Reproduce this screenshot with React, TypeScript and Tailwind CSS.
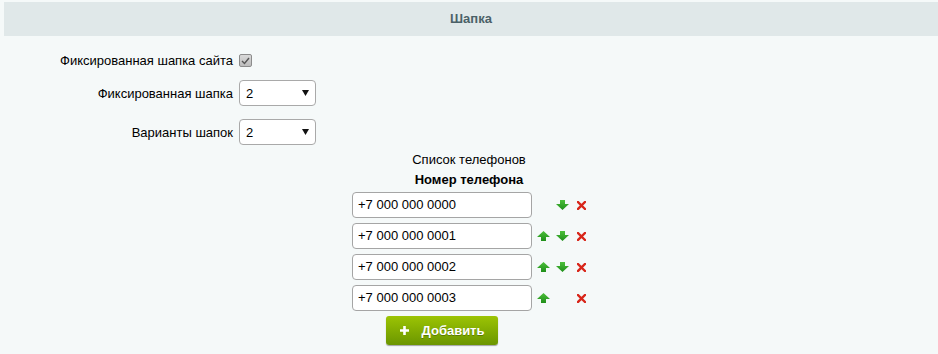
import React from 'react'

const phones = ['+7 000 000 0000', '+7 000 000 0001', '+7 000 000 0002', '+7 000 000 0003']

function ArrowUp() {
  return (
    <svg width="13" height="10" viewBox="0 0 13 10">
      <defs>
        <linearGradient id="gu" x1="0" y1="0" x2="0" y2="1">
          <stop offset="0" stopColor="#4cbf3a" />
          <stop offset="1" stopColor="#1f8f1a" />
        </linearGradient>
      </defs>
      <polygon points="6.5,0 13,6 9,6 9,10 4,10 4,6 0,6" fill="url(#gu)" />
    </svg>
  )
}

function ArrowDown() {
  return (
    <svg width="13" height="10" viewBox="0 0 13 10">
      <defs>
        <linearGradient id="gd" x1="0" y1="0" x2="0" y2="1">
          <stop offset="0" stopColor="#4cbf3a" />
          <stop offset="1" stopColor="#1f8f1a" />
        </linearGradient>
      </defs>
      <polygon points="4,0 9,0 9,4 13,4 6.5,10 0,4 4,4" fill="url(#gd)" />
    </svg>
  )
}

function Cross() {
  return (
    <svg width="9" height="9" viewBox="0 0 9 9">
      <path d="M1 1 L8 8 M8 1 L1 8" stroke="#d8261a" strokeWidth="2.4" strokeLinecap="square" />
    </svg>
  )
}

function FakeSelect({ value }: { value: string }) {
  return (
    <div className="flex h-[26px] w-[77px] items-center justify-between rounded-[4px] border border-[#a9a9a9] bg-white pl-[6px] pr-[6px] text-[13px] text-black">
      <span>{value}</span>
      <svg width="7" height="6" viewBox="0 0 7 6">
        <polygon points="0,0 7,0 3.5,6" fill="#111" />
      </svg>
    </div>
  )
}

export default function App() {
  return (
    <div
      className="min-h-[354px] w-full bg-[#f5f9f9] pt-[2px]"
      style={{ fontFamily: '"Liberation Sans", Arial, sans-serif' }}
    >
      {/* Section header */}
      <div className="ml-[4px] flex h-[34px] items-center justify-center bg-[#e0e8e9] text-[13px] font-bold text-[#4b6168]">
        Шапка
      </div>

      {/* Settings rows */}
      <div className="mt-[17px] grid grid-cols-[233px_auto] items-center gap-x-[6px] text-[13px] leading-[15px] text-black">
        <div className="text-right">Фиксированная шапка сайта</div>
        <div className="flex h-[13px] items-center">
          <div className="flex h-[13px] w-[13px] items-center justify-center rounded-[2px] border border-[#8c8c8c] bg-gradient-to-b from-[#d9d9d9] to-[#bdbdbd]">
            <svg width="9" height="8" viewBox="0 0 9 8">
              <path d="M1 4 L3.5 6.5 L8 1" stroke="#555" strokeWidth="1.4" fill="none" />
            </svg>
          </div>
        </div>

        <div className="mt-[12px] text-right">Фиксированная шапка</div>
        <div className="mt-[12px]">
          <FakeSelect value="2" />
        </div>

        <div className="mt-[13px] text-right">Варианты шапок</div>
        <div className="mt-[13px]">
          <FakeSelect value="2" />
        </div>
      </div>

      {/* Phones list */}
      <div className="mt-[7px] flex flex-col items-center text-[13px] text-black">
        <div className="leading-[16px]">Список телефонов</div>
        <div className="mt-[4px] font-bold leading-[16px]">Номер телефона</div>

        <div className="mt-[4px] flex flex-col gap-[5px]">
          {phones.map((phone, i) => (
            <div key={phone} className="flex items-center">
              <div className="flex h-[26px] w-[180px] items-center rounded-[4px] border border-[#a5a5a5] bg-white pl-[5px]">
                {phone}
              </div>
              <div className="ml-[5px] flex w-[13px] justify-center">
                {i > 0 && <ArrowUp />}
              </div>
              <div className="ml-[6px] flex w-[13px] justify-center">
                {i < phones.length - 1 && <ArrowDown />}
              </div>
              <div className="ml-[8px] flex w-[9px] justify-center">
                <Cross />
              </div>
            </div>
          ))}
          <div className="flex w-[180px] justify-center">
            <button className="flex h-[29px] w-[112px] items-center justify-center gap-[13px] rounded-[3px] bg-gradient-to-b from-[#9cc404] to-[#6b9600] text-[13px] font-bold text-white shadow-[0_1px_1px_rgba(0,0,0,0.35)] [text-shadow:0_1px_0_rgba(0,0,0,0.25)]">
              <svg width="9" height="9" viewBox="0 0 9 9">
                <path d="M4.5 0 V9 M0 4.5 H9" stroke="#fff" strokeWidth="2.6" />
              </svg>
              <span>Добавить</span>
            </button>
          </div>
        </div>
      </div>
    </div>
  )
}
